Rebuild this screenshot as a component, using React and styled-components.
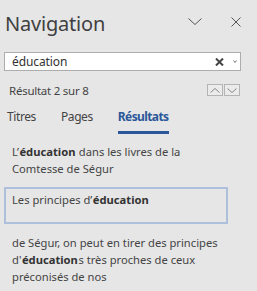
import React from 'react';
import styled, { createGlobalStyle } from 'styled-components';

const GlobalStyle = createGlobalStyle`
  html, body {
    margin: 0;
    padding: 0;
    background: #e6e6e6;
  }
  body {
    font-family: "Noto Sans", "Open Sans", sans-serif;
    color: #444;
  }
`;

const Pane = styled.div`
  width: 257px;
  height: 291px;
  background: #e6e6e6;
  overflow: hidden;
  display: flex;
  flex-direction: column;
`;

const Header = styled.div`
  display: flex;
  align-items: flex-start;
  padding: 10px 16px 0 5px;
  height: 28px;
`;

const Title = styled.h1`
  flex: 1;
  margin: 0;
  font-size: 20px;
  line-height: 28px;
  font-weight: 400;
  color: #404040;
  letter-spacing: -0.2px;
`;

const HeaderIcon = styled.button`
  border: none;
  background: none;
  padding: 0;
  display: flex;
  margin-top: ${(p) => p.top}px;
  margin-left: ${(p) => p.gap || 0}px;
`;

const SearchBox = styled.div`
  margin: 14px 16px 0 4px;
  height: 21px;
  background: #fff;
  border: 1px solid #adadad;
  display: flex;
  align-items: center;
  padding: 0 3px 0 7px;
`;

const SearchText = styled.span`
  flex: 1;
  font-size: 12px;
  color: #333;
  letter-spacing: -0.1px;
`;

const StatusRow = styled.div`
  display: flex;
  align-items: flex-start;
  margin-top: 13px;
  padding: 0 17px 0 9px;
  height: 14px;
`;

const StatusText = styled.span`
  flex: 1;
  font-size: 11.5px;
  line-height: 14px;
  color: #444;
  letter-spacing: -0.25px;
`;

const StepButton = styled.div`
  width: 14px;
  height: 10px;
  border: 1px solid #b4b4b4;
  background: #ebebeb;
  display: flex;
  align-items: center;
  justify-content: center;
  margin-left: 1px;
`;

const Tabs = styled.div`
  display: flex;
  align-items: flex-start;
  gap: 25px;
  margin-top: 11px;
  padding-left: 7px;
`;

const Tab = styled.div`
  font-size: 12px;
  line-height: 16px;
  color: ${(p) => (p.active ? '#2b579a' : '#444')};
  font-weight: ${(p) => (p.active ? 700 : 400)};
  letter-spacing: ${(p) => (p.active ? '-0.6px' : '-0.4px')};
  padding-bottom: 6px;
  border-bottom: 3px solid ${(p) => (p.active ? '#2b579a' : 'transparent')};
`;

const Results = styled.div`
  display: flex;
  flex-direction: column;
  margin-top: 9px;
`;

const Result = styled.div`
  font-size: 11.2px;
  line-height: 17px;
  color: #444;
  margin: 0 ${(p) => (p.selected ? 29 : 20)}px 10px 4px;
  padding: ${(p) => (p.selected ? '2px 6px 14px' : '0 8px')};
  border: ${(p) => (p.selected ? '2px solid #aebfdc' : 'none')};

  b {
    color: #333;
    font-weight: 700;
    margin: 0 0.5px;
  }
`;

const Chevron = ({ up, width = 14, height = 7, stroke = '#555' }) => (
  <svg width={width} height={height} viewBox={`0 0 ${width} ${height}`}>
    <path
      d={
        up
          ? `M0.5 ${height - 0.5} L${width / 2} 0.5 L${width - 0.5} ${height - 0.5}`
          : `M0.5 0.5 L${width / 2} ${height - 0.5} L${width - 0.5} 0.5`
      }
      fill="none"
      stroke={stroke}
      strokeWidth="1"
    />
  </svg>
);

const App = () => {
  return (
    <Pane>
      <GlobalStyle />
      <Header>
        <Title>Navigation</Title>
        <HeaderIcon top={8}>
          <Chevron width={14} height={7} stroke="#555" />
        </HeaderIcon>
        <HeaderIcon top={7} gap={29}>
          <svg width="10" height="10" viewBox="0 0 10 10">
            <path d="M0.5 0.5 L9.5 9.5 M9.5 0.5 L0.5 9.5" stroke="#555" strokeWidth="1" />
          </svg>
        </HeaderIcon>
      </Header>

      <SearchBox>
        <SearchText>éducation</SearchText>
        <svg width="9" height="8" viewBox="0 0 9 8">
          <path d="M1 0.5 L8 7.5 M8 0.5 L1 7.5" stroke="#444" strokeWidth="2" />
        </svg>
        <span style={{ width: 9 }} />
        <svg width="4" height="3" viewBox="0 0 4 3">
          <path d="M0.5 0.5 L2 2.5 L3.5 0.5" fill="none" stroke="#777" strokeWidth="1" />
        </svg>
      </SearchBox>

      <StatusRow>
        <StatusText>Résultat 2 sur 8</StatusText>
        <StepButton>
          <Chevron up width={10} height={5} stroke="#888" />
        </StepButton>
        <StepButton>
          <Chevron width={10} height={5} stroke="#888" />
        </StepButton>
      </StatusRow>

      <Tabs>
        <Tab>Titres</Tab>
        <Tab>Pages</Tab>
        <Tab active>Résultats</Tab>
      </Tabs>

      <Results>
        <Result>
          L’<b>éducation</b> dans les livres de la Comtesse de Ségur
        </Result>
        <Result selected>
          Les principes d’<b>éducation</b>
        </Result>
        <Result>
          de Ségur, on peut en tirer des principes d'<b>éducation</b>s très proches de ceux préconisés de nos
        </Result>
      </Results>
    </Pane>
  );
};

export default App;
